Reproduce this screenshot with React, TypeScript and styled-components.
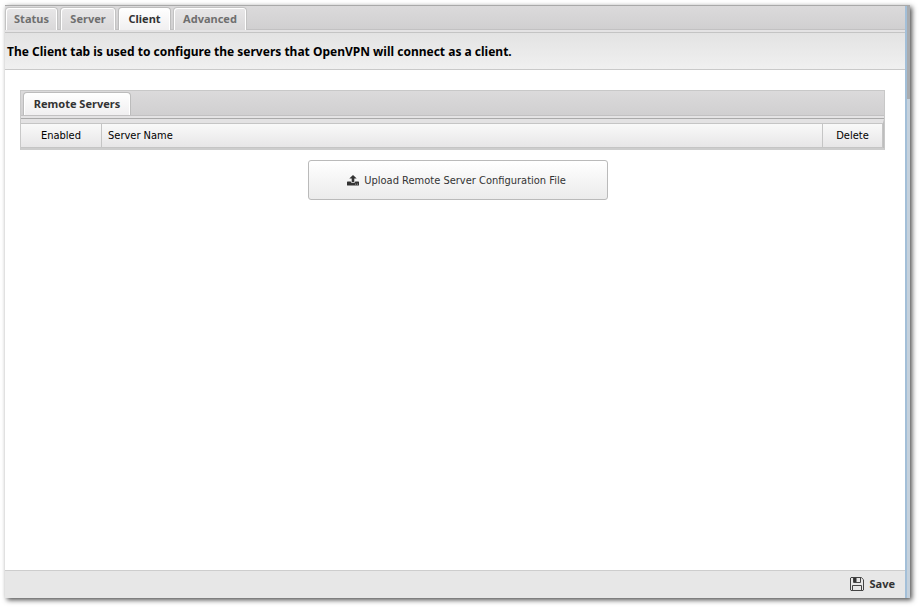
import React from "react";
import styled, { createGlobalStyle } from "styled-components";

const Global = createGlobalStyle`
  * { box-sizing: border-box; }
  html, body, #root { height: 100%; margin: 0; }
  body { background: #fff; font: 11px/16px "DejaVu Sans Condensed", "DejaVu Sans", sans-serif; color: #111; }
  button { font: inherit; color: inherit; margin: 0; cursor: pointer; }
`;

const boldFont = `"Noto Sans", "Open Sans", sans-serif`;

const Page = styled.div`
  min-height: 100%;
  display: flex;
  padding: 5px 9px 9px 5px;
`;

const Window = styled.main`
  flex: 1;
  min-width: 0;
  display: flex;
  background: #fff;
  border-top: 1px solid #a9a9a9;
  box-shadow: 2px 2px 5px rgba(0, 0, 0, 0.7);
`;

const Content = styled.div`
  flex: 1;
  min-width: 0;
  display: flex;
  flex-direction: column;
`;

const ScrollRail = styled.div`
  width: 5px;
  border-left: 2px solid #a3bfd8;
  background: linear-gradient(#a9abae, #a9abae) top / 100% 93px no-repeat #c5d1dc;
`;

const TabBar = styled.div<{ $inset?: boolean }>`
  display: flex;
  gap: 2px;
  height: ${(p) => (p.$inset ? 28 : 27)}px;
  padding-top: 1px;
  padding-left: ${(p) => (p.$inset ? 2 : 0)}px;
  background: linear-gradient(#dbdadb, #cfcecf);
  border-bottom: 1px solid ${(p) => (p.$inset ? "#aaa" : "#c4c4c4")};
  box-shadow: inset 0 -2px #e4e3e4, inset 0 -3px #c2c1c2;
`;

const Tab = styled.button<{ $width: number; $active?: boolean }>`
  width: ${(p) => p.$width}px;
  height: 23px;
  padding: 0;
  border: 1px solid ${(p) => (p.$active ? "#bcbcbc" : "#c3c3c3")};
  border-bottom: 0;
  border-radius: 4px 4px 0 0;
  box-shadow: inset 1px 1px #fff, inset -1px 0 #fff;
  background: ${(p) =>
    p.$active ? "linear-gradient(#fff, #f0eff0)" : "linear-gradient(#e8e7e8, #d9d8d9)"};
  color: ${(p) => (p.$active ? "#333" : "#6f6f6f")};
  font-family: ${boldFont};
  font-weight: 700;
  white-space: nowrap;
`;

const Heading = styled.h1`
  margin: 0;
  min-height: 37px;
  padding: 2px 2px 0;
  border-bottom: 1px solid #c9c9c9;
  background: linear-gradient(#e3e3e3, #f0f0f0);
  color: #000;
  font-family: ${boldFont};
  font-size: 12px;
  line-height: 34px;
`;

const Body = styled.section`
  flex: 1;
  padding: 20px 20px 20px 15px;
`;

const Panel = styled.div`
  border: 1px solid #c8c8c8;
  border-bottom: 2px solid #cdcdcd;
`;

const Grid = styled.table`
  width: 100%;
  table-layout: fixed;
  border-collapse: separate;
  border-spacing: 0;
  border-top: 4px solid #e3e2e3;
  border-right: 1px solid #bdbdbd;
`;

const Column = styled.th<{ $width?: number; $center?: boolean }>`
  width: ${(p) => (p.$width ? `${p.$width}px` : "auto")};
  height: 25px;
  padding: 0 6px;
  text-align: ${(p) => (p.$center ? "center" : "left")};
  border-top: 1px solid #c5c5c5;
  border-right: 1px solid #c5c5c5;
  border-bottom: 1px solid #c5c5c5;
  background: linear-gradient(#f9f9f9, #e7e6e7);
  font-weight: 400;
  color: #000;
`;

const Actions = styled.div`
  display: flex;
  justify-content: center;
  padding: 10px 0 0 10px;
`;

const UploadButton = styled.button`
  display: flex;
  align-items: center;
  justify-content: center;
  gap: 5px;
  width: 300px;
  height: 40px;
  padding: 2px 2px 0 0;
  border: 1px solid #bababa;
  border-radius: 3px;
  background: linear-gradient(#fff, #ebebeb);
  color: #333;
`;

const Footer = styled.footer`
  display: flex;
  justify-content: flex-end;
  height: 28px;
  padding-right: 10px;
  border-top: 1px solid #cdcdcd;
  background: #e7e7e7;
`;

const SaveButton = styled.button`
  display: flex;
  align-items: center;
  gap: 6px;
  padding: 0 0 2px;
  border: 0;
  background: none;
  color: #333;
  font-family: ${boldFont};
  font-weight: 700;
`;

const UploadIcon = () => (
  <svg width="12" height="12" viewBox="0 0 12 12" fill="#333" aria-hidden="true">
    <path d="M6 0 9.7 3.6H7.3V7H4.7V3.6H2.3Z" />
    <path
      d="M0.6 6.6H3.7Q4 7.8 5 7.8H7Q8 7.8 8.3 6.6H11.4Q12 6.6 12 7.2V9.9Q12 10.5 11.4 10.5H0.6Q0 10.5 0 9.9V7.2Q0 6.6 0.6 6.6ZM8.3 8.8V9.5H9.1V8.8ZM10 8.8V9.5H10.8V8.8Z"
      fillRule="evenodd"
    />
  </svg>
);

const SaveIcon = () => (
  <svg width="14" height="14" viewBox="0 0 14 14" fill="none" stroke="#444" aria-hidden="true">
    <path d="M1 .5H11.3L13.5 2.7V13L13 13.5H1L.5 13V1Z" />
    <path d="M3.5 .5V5.5H10.5V.5M2.5 13.5V8.5H11.5V13.5" />
    <path d="M4 3H6.5" stroke="#333" strokeWidth="4" />
  </svg>
);

const tabs = [
  { name: "Status", width: 53 },
  { name: "Server", width: 56 },
  { name: "Client", width: 53 },
  { name: "Advanced", width: 74 },
];

export default function App() {
  return (
    <>
      <Global />
      <Page>
        <Window>
          <Content>
            <TabBar role="tablist">
              {tabs.map((t) => (
                <Tab
                  key={t.name}
                  role="tab"
                  aria-selected={t.name === "Client"}
                  $width={t.width}
                  $active={t.name === "Client"}
                >
                  {t.name}
                </Tab>
              ))}
            </TabBar>
            <Heading>
              The Client tab is used to configure the servers that OpenVPN will connect as a client.
            </Heading>
            <Body>
              <Panel>
                <TabBar $inset role="tablist">
                  <Tab role="tab" aria-selected $width={108} $active>
                    Remote Servers
                  </Tab>
                </TabBar>
                <Grid>
                  <thead>
                    <tr>
                      <Column $width={81} $center>Enabled</Column>
                      <Column>Server Name</Column>
                      <Column $width={60} $center>Delete</Column>
                    </tr>
                  </thead>
                </Grid>
              </Panel>
              <Actions>
                <UploadButton>
                  <UploadIcon />
                  Upload Remote Server Configuration File
                </UploadButton>
              </Actions>
            </Body>
            <Footer>
              <SaveButton>
                <SaveIcon />
                Save
              </SaveButton>
            </Footer>
          </Content>
          <ScrollRail />
        </Window>
      </Page>
    </>
  );
}
